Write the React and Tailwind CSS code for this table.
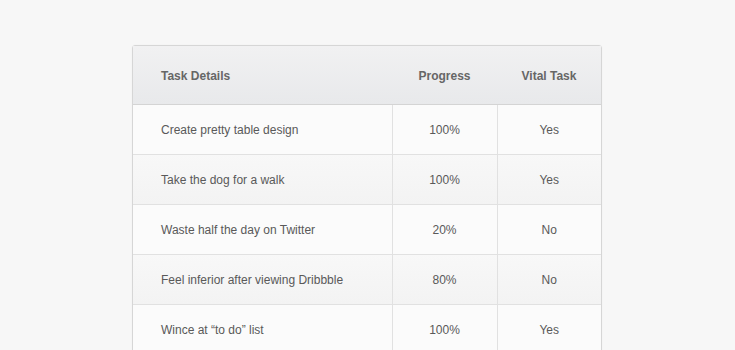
import React from 'react';

const tasks = [
    { name: 'Create pretty table design', progress: '100%', vital: 'Yes' },
    { name: 'Take the dog for a walk', progress: '100%', vital: 'Yes' },
    { name: 'Waste half the day on Twitter', progress: '20%', vital: 'No' },
    { name: 'Feel inferior after viewing Dribbble', progress: '80%', vital: 'No' },
    { name: 'Wince at \u201cto do\u201d list', progress: '100%', vital: 'Yes' },
];

const App = () => {
    return (
        <div className="min-h-[350px] bg-[#f7f7f7] pt-[45px] font-['Liberation_Sans',Arial,sans-serif]">
            <div className="ml-[132px] w-[470px] rounded-t-[3px] border border-[#d6d6d6] shadow-[0_0_2px_rgba(0,0,0,0.04)]">
                <table className="w-full border-collapse">
                    <thead>
                        <tr className="h-[58px] bg-gradient-to-b from-[#f1f1f2] to-[#e8e9eb] text-[12px] font-bold text-[#666]">
                            <th className="w-[259px] border-b border-[#d4d4d4] pl-[28px] pt-[2px] text-left">Task Details</th>
                            <th className="w-[105px] border-b border-[#d4d4d4] pt-[2px] text-center">Progress</th>
                            <th className="border-b border-[#d4d4d4] pt-[2px] text-center">Vital Task</th>
                        </tr>
                    </thead>
                    <tbody>
                        {tasks.map((task, i) => (
                            <tr
                                key={task.name}
                                className={`h-[50px] text-[12px] text-[#595959] ${i % 2 === 0 ? 'bg-[#fbfbfb]' : 'bg-gradient-to-b from-[#f8f8f8] to-[#f3f3f3]'}`}
                            >
                                <td className="border-t border-[#e1e1e1] pl-[28px] pt-[2px]">{task.name}</td>
                                <td className="border-t border-l border-[#e1e1e1] pt-[2px] text-center">{task.progress}</td>
                                <td className="border-t border-l border-[#e1e1e1] pt-[2px] text-center">{task.vital}</td>
                            </tr>
                        ))}
                    </tbody>
                </table>
            </div>
        </div>
    );
};

export default App;
